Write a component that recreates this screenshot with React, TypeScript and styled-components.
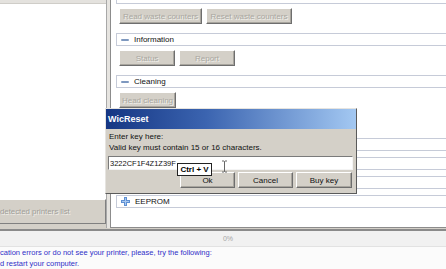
import styled, { createGlobalStyle } from "styled-components";

const GlobalStyle = createGlobalStyle`
  html, body {
    margin: 0;
    padding: 0;
    background: #ffffff;
  }
  body {
    font-family: "Liberation Sans", Arial, sans-serif;
  }
  * {
    box-sizing: border-box;
  }
`;

const Screen = styled.div`
  position: relative;
  width: 446px;
  height: 269px;
  overflow: hidden;
  background: #ffffff;
  display: flex;
  flex-direction: column;
  font-size: 8px;
  color: #000000;
`;

const Main = styled.div`
  height: 233px;
  display: flex;
  background: #d4d0c8;
  padding-bottom: 1px;
`;

const LeftPanel = styled.div`
  width: 106px;
  display: flex;
  flex-direction: column;
  background: #ffffff;
`;

const LeftHeader = styled.div`
  height: 4px;
  background: #e4e2de;
  border-bottom: 1px solid #cfcdc8;
`;

const PrinterList = styled.div`
  flex: 1;
  background: #ffffff;
`;

const LeftFooter = styled.div`
  height: 4px;
  background: #d4d0c8;
`;

const Splitter = styled.div`
  width: 4px;
  background: #e6e4e0;
  border-left: 1px solid #a8a8a8;
`;

const RightPanel = styled.div`
  flex: 1;
  background: #ffffff;
  border-left: 1px solid #8c8c8c;
  border-bottom: 1px solid #8c8c8c;
  overflow: hidden;
`;

const SectionList = styled.div`
  margin-top: -9px;
  padding-left: 5px;
  display: flex;
  flex-direction: column;
`;

const SectionHeader = styled.div<{ $gap?: number }>`
  height: 13px;
  margin-bottom: ${(p) => p.$gap ?? 0}px;
  border: 1px solid #c6cbd8;
  border-right: none;
  background: #ffffff;
  display: flex;
  align-items: center;
  gap: 5px;
  padding-left: 4px;
  font-size: 8px;
  color: #111111;
  white-space: nowrap;
`;

const MinusIcon = styled.span`
  width: 8px;
  height: 2px;
  background: #7e98bf;
  border-radius: 1px;
`;

const ButtonRow = styled.div<{ $after: number }>`
  display: flex;
  gap: 4px;
  margin: 4px 0 ${(p) => p.$after}px 3px;
`;

const Button = styled.button<{ $width: number; $disabled?: boolean }>`
  width: ${(p) => p.$width}px;
  height: 16px;
  padding: 0;
  background: #d4d0c8;
  border: 1px solid;
  border-color: #ffffff #6e6e6e #6e6e6e #ffffff;
  box-shadow: inset -1px -1px 0 #a8a59e;
  font-family: "Liberation Sans", Arial, sans-serif;
  font-size: 8px;
  color: ${(p) => (p.$disabled ? "#a9a7a1" : "#111111")};
  text-shadow: ${(p) => (p.$disabled ? "1px 1px 0 #f2f0ec" : "none")};
  white-space: nowrap;
  overflow: hidden;
`;

const RefreshButton = styled.div`
  height: 25px;
  background: #d4d0c8;
  border-top: 1px solid #ffffff;
  border-bottom: 1px solid #808080;
  border-right: 1px solid #808080;
  display: flex;
  align-items: center;
  font-size: 7.8px;
  color: #a09e98;
  text-shadow: 1px 1px 0 #f0eee9;
  white-space: nowrap;
`;

const ProgressArea = styled.div`
  height: 18px;
  background: #f1f1f1;
  border-top: 2px solid #8a8a8a;
  border-bottom: 1px solid #e2e2e2;
  display: flex;
  align-items: center;
  justify-content: center;
  padding-left: 10px;
  font-size: 7px;
  color: #a6a6a6;
`;

const InfoArea = styled.div`
  flex: 1;
  background: #fbfbfb;
`;

const InfoLine = styled.div`
  height: 11px;
  line-height: 11px;
  font-size: 7.5px;
  color: #2f2fc8;
  white-space: nowrap;
`;

const Dialog = styled.div`
  position: absolute;
  left: 105px;
  top: 108px;
  width: 252px;
  height: 86px;
  background: #d4d0c8;
  border: 1px solid;
  border-color: #e6e4e0 #5a5a5a #5a5a5a #e6e4e0;
  display: flex;
  flex-direction: column;
`;

const TitleBar = styled.div`
  height: 20px;
  background: linear-gradient(to right, #153683 0%, #3b64b0 40%, #a3c8f2 100%);
  display: flex;
  align-items: center;
  padding-left: 2px;
  font-size: 9px;
  font-weight: bold;
  color: #ffffff;
`;

const DialogBody = styled.div`
  padding: 2px 3px 0 2px;
  display: flex;
  flex-direction: column;
`;

const DialogText = styled.div`
  height: 11px;
  line-height: 11px;
  padding-left: 1px;
  font-size: 8px;
  color: #111111;
  white-space: nowrap;
`;

const KeyInput = styled.div`
  height: 14px;
  margin-top: 3px;
  background: #ffffff;
  border: 1px solid;
  border-color: #7a7a7a #f4f4f4 #f4f4f4 #7a7a7a;
  display: flex;
  align-items: center;
  padding-left: 1px;
  font-size: 7.5px;
  color: #111111;
  white-space: nowrap;
`;

const DialogButtons = styled.div`
  display: flex;
  justify-content: flex-end;
  gap: 3px;
  margin-top: 2px;
  padding-right: 1px;
`;

const Tooltip = styled.div`
  position: absolute;
  left: 71px;
  top: 54px;
  width: 35px;
  height: 13px;
  background: #ffffff;
  border: 1px solid #222222;
  display: flex;
  align-items: center;
  justify-content: center;
  font-size: 8px;
  font-weight: bold;
  color: #000000;
  white-space: nowrap;
`;

const Cursor = styled.svg`
  position: absolute;
  left: 115px;
  top: 51px;
`;

function PlusIcon() {
  return (
    <svg width="9" height="9" viewBox="0 0 9 9">
      <path d="M3 0h3v3h3v3H6v3H3V6H0V3h3z" fill="#5d8fd3" />
      <path d="M4 1h1v3h3v1H5v3H4V5H1V4h3z" fill="#a9c8ef" />
    </svg>
  );
}

const collapsed = ["Ink charging", "Firmware", "Serial number"];

export default function App() {
  return (
    <>
      <GlobalStyle />
      <Screen>
        <Main>
          <LeftPanel>
            <LeftHeader />
            <PrinterList />
            <RefreshButton>detected printers list</RefreshButton>
            <LeftFooter />
          </LeftPanel>
          <Splitter />
          <RightPanel>
            <SectionList>
              <SectionHeader>
                <MinusIcon />
                Waste counters
              </SectionHeader>
              <ButtonRow $after={9}>
                <Button $width={83} $disabled>
                  Read waste counters
                </Button>
                <Button $width={86} $disabled>
                  Reset waste counters
                </Button>
              </ButtonRow>
              <SectionHeader>
                <MinusIcon />
                Information
              </SectionHeader>
              <ButtonRow $after={9}>
                <Button $width={56} $disabled>
                  Status
                </Button>
                <Button $width={56} $disabled>
                  Report
                </Button>
              </ButtonRow>
              <SectionHeader>
                <MinusIcon />
                Cleaning
              </SectionHeader>
              <ButtonRow $after={30}>
                <Button $width={57} $disabled>
                  Head cleaning
                </Button>
              </ButtonRow>
              {collapsed.map((name) => (
                <SectionHeader key={name} $gap={6}>
                  <PlusIcon />
                  {name}
                </SectionHeader>
              ))}
              <SectionHeader>
                <PlusIcon />
                EEPROM
              </SectionHeader>
            </SectionList>
          </RightPanel>
        </Main>
        <ProgressArea>0%</ProgressArea>
        <InfoArea>
          <InfoLine>cation errors or do not see your printer, please, try the following:</InfoLine>
          <InfoLine>d restart your computer.</InfoLine>
        </InfoArea>

        <Dialog>
          <TitleBar>WicReset</TitleBar>
          <DialogBody>
            <DialogText>Enter key here:</DialogText>
            <DialogText>Valid key must contain 15 or 16 characters.</DialogText>
            <KeyInput>3222CF1F4Z1Z39F</KeyInput>
            <DialogButtons>
              <Button $width={55}>Ok</Button>
              <Button $width={55}>Cancel</Button>
              <Button $width={56}>Buy key</Button>
            </DialogButtons>
          </DialogBody>
          <Tooltip>Ctrl + V</Tooltip>
          <Cursor width="7" height="13" viewBox="0 0 7 13">
            <path
              d="M1 1h2l.5.5.5-.5h2M3.5 1.5v10M1 12h2l.5-.5.5.5h2"
              stroke="#666666"
              strokeWidth="1"
              fill="none"
            />
          </Cursor>
        </Dialog>
      </Screen>
    </>
  );
}
